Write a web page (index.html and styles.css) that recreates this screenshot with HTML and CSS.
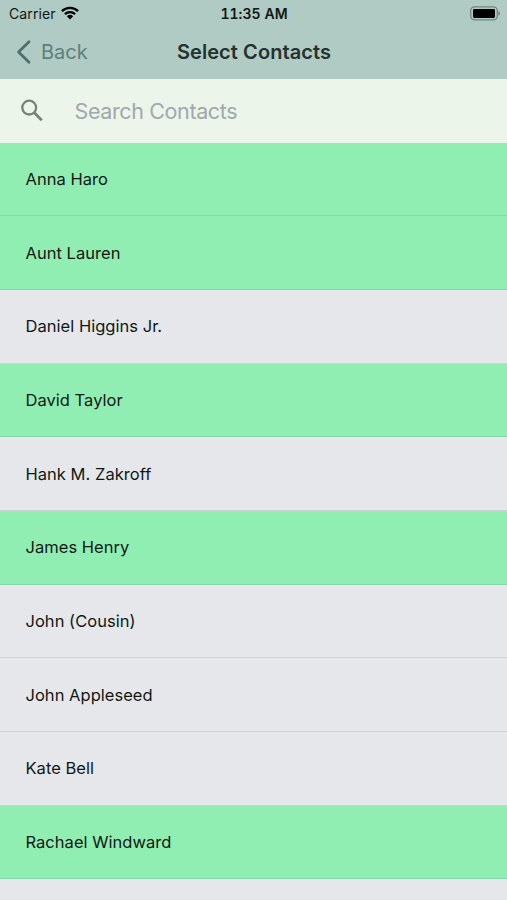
FILE: index.html
```html
<!DOCTYPE html>
<html lang="en">
<head>
<meta charset="utf-8">
<title>Select Contacts</title>
<link rel="stylesheet" href="styles.css">
</head>
<body>
<header class="header">
  <div class="status">
    <div class="carrier"><span>Carrier</span>
      <svg class="wifi" viewBox="0 0 18 14" width="18" height="14"><g fill="none" stroke="#000" stroke-width="2.3"><path d="M.9 5.1a11.6 11.6 0 0 1 16.2 0"/><path d="M3.9 8.1a7.4 7.4 0 0 1 10.2 0"/></g><path d="M5.9 10.2a4.5 4.5 0 0 1 6.2 0L9 13.4Z"/></svg>
    </div>
    <span class="time">11:35 AM</span>
    <svg class="battery" viewBox="0 0 31 15" width="31" height="15"><rect x=".7" y=".9" width="26.6" height="13" rx="3.8" fill="none" stroke="#748681" stroke-width="1.3"/><rect x="3" y="2.9" width="22" height="9" rx="1.3"/><path d="M28.4 5.2c2.2.6 2.2 3.8 0 4.4Z" fill="#748681"/></svg>
  </div>
  <nav class="nav">
    <a class="back"><svg viewBox="0 0 15 24" width="15" height="24"><path d="M13 1.8 2.6 12 13 22.2" fill="none" stroke="#4e706b" stroke-width="2.8" stroke-linecap="round" stroke-linejoin="round"/></svg><span>Back</span></a>
    <h1 class="title">Select Contacts</h1>
  </nav>
</header>
<div class="search">
  <svg viewBox="0 0 22 22" width="22" height="22"><g fill="none" stroke="#788078" stroke-width="2.3"><circle cx="8.2" cy="7.6" r="6.9"/><path d="m13 12.4 7.8 7.8" stroke-width="2.8"/></g></svg>
  <span class="placeholder">Search Contacts</span>
</div>
<ul class="list">
  <li class="row selected">Anna Haro</li>
  <li class="row selected">Aunt Lauren</li>
  <li class="row">Daniel Higgins Jr.</li>
  <li class="row selected">David Taylor</li>
  <li class="row">Hank M. Zakroff</li>
  <li class="row selected">James Henry</li>
  <li class="row">John (Cousin)</li>
  <li class="row">John Appleseed</li>
  <li class="row">Kate Bell</li>
  <li class="row selected">Rachael Windward</li>
</ul>
</body>
</html>
```

FILE: styles.css
```css
* { box-sizing: border-box; }
body {
  margin: 0;
  height: 900px;
  overflow: hidden;
  background: #e5e7eb;
  font-family: Inter, "Liberation Sans", sans-serif;
  color: #111814;
}
svg { display: block; flex: none; overflow: visible; }
.header { height: 79px; background: #b0cac4; border-bottom: 1px solid #aecbc5; }
.status {
  height: 27px;
  display: grid;
  grid-template-columns: 1fr auto 1fr;
  align-items: center;
  padding: 0 6px 0 9px;
}
.carrier { display: flex; align-items: center; gap: 5px; font-size: 14px; letter-spacing: .1px; }
.wifi { margin-top: -2px; }
.time { font-size: 14px; font-weight: 600; font-variant-numeric: tabular-nums; letter-spacing: .05px; margin-right: 2px; }
.battery { justify-self: end; }
.nav {
  height: 50px;
  display: grid;
  grid-template-columns: 1fr auto 1fr;
  align-items: center;
  padding: 0 15px 0 16px;
}
.back { display: flex; align-items: center; gap: 10px; font-size: 20px; color: #5e817b; }
.title { margin: 0; font-size: 20px; font-weight: 600; letter-spacing: .08px; color: #25312f; }
.search {
  height: 63.75px;
  display: flex;
  align-items: center;
  gap: 31.5px;
  padding-left: 21px;
  background: #ebf5e9;
}
.placeholder { font-size: 21.5px; letter-spacing: -.38px; color: #a1a8ae; }
.list { margin: 0; padding: 0; list-style: none; }
.row {
  height: 73.68px;
  display: flex;
  align-items: center;
  padding-left: 25.5px;
  border-bottom: 1px solid #c9d3d8;
  font-size: 16.5px;
  letter-spacing: .03px;
}
.selected { background: #90eeb3; border-color: #82d9a8; }
```
